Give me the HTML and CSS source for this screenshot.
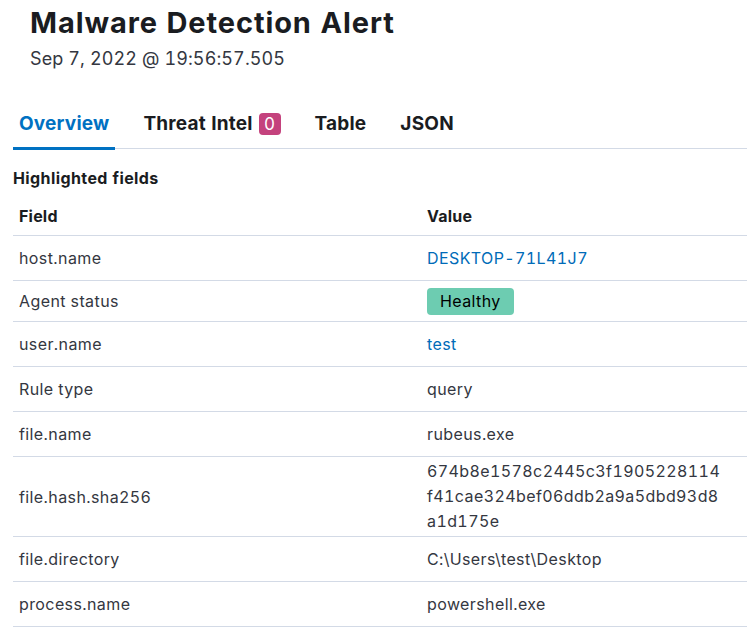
FILE: index.html
```html
<!DOCTYPE html>
<html lang="en">
<head>
<meta charset="utf-8">
<title>Malware Detection Alert</title>
<link rel="stylesheet" href="styles.css">
</head>
<body>
<div class="flyout">
  <header class="head">
    <h1 class="title">Malware Detection Alert</h1>
    <div class="date">Sep 7, 2022 @ 19:56:57.505</div>
  </header>
  <nav class="tabs">
    <div class="tab tab-active">Overview</div>
    <div class="tab">Threat Intel <span class="count">0</span></div>
    <div class="tab">Table</div>
    <div class="tab">JSON</div>
  </nav>
  <section class="content">
    <h3 class="section-title">Highlighted fields</h3>
    <div class="table">
      <div class="row row-head">
        <div class="cell cell-field">Field</div>
        <div class="cell cell-value">Value</div>
      </div>
      <div class="row">
        <div class="cell cell-field">host.name</div>
        <div class="cell cell-value"><a class="link">DESKTOP-71L41J7</a></div>
      </div>
      <div class="row row-badge">
        <div class="cell cell-field">Agent status</div>
        <div class="cell cell-value"><span class="health">Healthy</span></div>
      </div>
      <div class="row">
        <div class="cell cell-field">user.name</div>
        <div class="cell cell-value"><a class="link">test</a></div>
      </div>
      <div class="row">
        <div class="cell cell-field">Rule type</div>
        <div class="cell cell-value">query</div>
      </div>
      <div class="row">
        <div class="cell cell-field">file.name</div>
        <div class="cell cell-value">rubeus.exe</div>
      </div>
      <div class="row row-hash">
        <div class="cell cell-field">file.hash.sha256</div>
        <div class="cell cell-value"><span class="hash">674b8e1578c2445c3f1905228114f41cae324bef06ddb2a9a5dbd93d8a1d175e</span></div>
      </div>
      <div class="row">
        <div class="cell cell-field">file.directory</div>
        <div class="cell cell-value">C:\Users\test\Desktop</div>
      </div>
      <div class="row">
        <div class="cell cell-field">process.name</div>
        <div class="cell cell-value">powershell.exe</div>
      </div>
    </div>
  </section>
</div>
</body>
</html>
```

FILE: styles.css
```css
html, body {
  margin: 0;
  padding: 0;
  background: #ffffff;
}

body {
  font-family: Inter, "Noto Sans", "DejaVu Sans", sans-serif;
  font-feature-settings: "tnum" 1;
  color: #343741;
  overflow: hidden;
}

.flyout {
  width: 747px;
}

.head {
  padding: 5px 0 0 30px;
}

.title {
  margin: 0;
  font-size: 29px;
  line-height: 35px;
  font-weight: 700;
  letter-spacing: 0.9px;
  color: #1a1c21;
}

.date {
  margin-top: 7px;
  font-size: 18px;
  line-height: 24px;
  letter-spacing: 0.1px;
  color: #343741;
}

.tabs {
  margin: 28px 0 0 13px;
  display: flex;
  gap: 22px;
  border-bottom: 1px solid #d3dae6;
}

.tab {
  position: relative;
  height: 49px;
  padding: 0 6px;
  display: flex;
  align-items: center;
  font-size: 19px;
  line-height: 24px;
  font-weight: 700;
  letter-spacing: 0.2px;
  color: #1a1c21;
}

.tab-active {
  color: #0071c2;
}

.tab-active::after {
  content: "";
  position: absolute;
  left: 0;
  right: 0;
  bottom: -2px;
  height: 3px;
  background: #0071c2;
}

.count {
  display: inline-flex;
  align-items: center;
  justify-content: center;
  width: 22px;
  height: 22px;
  margin-left: 6px;
  border-radius: 4px;
  background: #c4427d;
  color: #ffffff;
  font-size: 17px;
  font-weight: 400;
  letter-spacing: 0;
}

.content {
  padding-left: 13px;
}

.section-title {
  margin: 19px 0 8px 0;
  font-size: 16px;
  line-height: 20px;
  font-weight: 700;
  letter-spacing: 0.4px;
  color: #1a1c21;
}

.row {
  display: flex;
  align-items: center;
  min-height: 44px;
  border-bottom: 1px solid #d3dae6;
  font-size: 16px;
  line-height: 24px;
  letter-spacing: 0.4px;
}

.row-head {
  min-height: 39px;
  font-weight: 700;
  letter-spacing: 0.2px;
  color: #1a1c21;
}

.row-badge {
  min-height: 40px;
}

.row-hash {
  min-height: 79px;
}

.cell {
  padding: 0 6px;
}

.cell-field {
  width: 396px;
  flex: none;
}

.cell-value {
  flex: 1;
  min-width: 0;
}

.link {
  color: #006bb8;
  text-decoration: none;
}

.health {
  display: inline-flex;
  align-items: center;
  height: 27px;
  padding: 0 13px;
  border-radius: 4px;
  background: #6dccb1;
  color: #000000;
  vertical-align: middle;
}

.hash {
  display: block;
  max-width: 296px;
  word-break: break-all;
  line-height: 25px;
  padding: 2px 0;
}
```
